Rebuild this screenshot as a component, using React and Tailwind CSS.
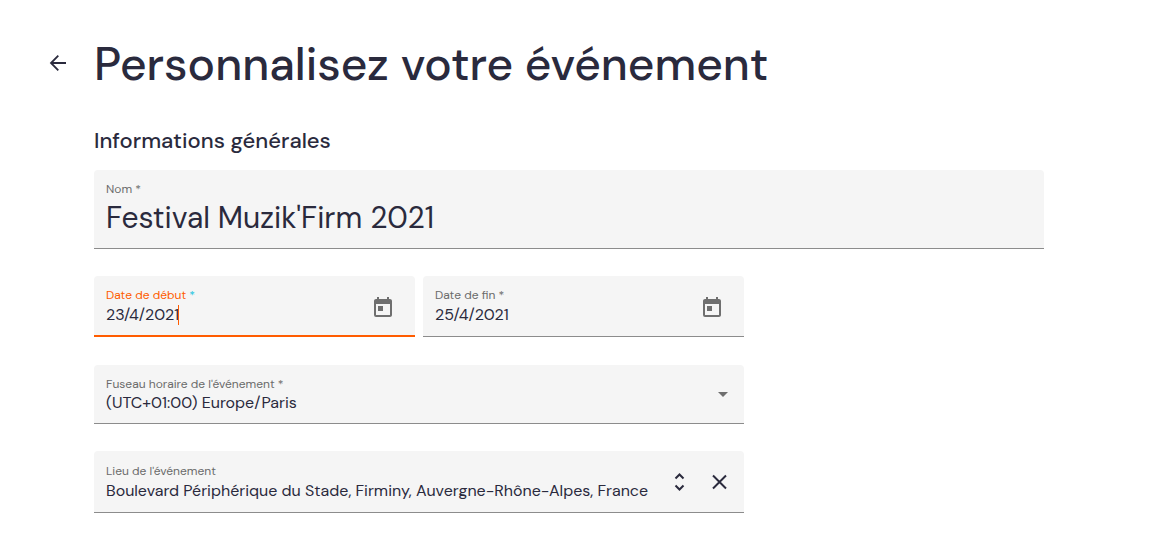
import React from "react";
import { MdToday, MdArrowDropDown } from "react-icons/md";

const valueClass = "block bg-transparent p-0 text-base leading-5 text-[#2a2a3d] outline-none";

function Field({ id, label, required, focused, className, children, actions }) {
  return (
    <div
      className={`flex items-center rounded-t bg-[#f5f5f5] px-3 ${
        focused ? "border-b-2 border-[#ff5c00]" : "border-b border-[#8c8c8c]"
      } ${className}`}
    >
      <div className="min-w-0 flex-1 self-start pt-[11px]">
        <label
          htmlFor={id}
          className={`block text-xs leading-4 ${focused ? "text-[#ff5c00]" : "text-[#6b6b6b]"}`}
        >
          {label}
          {required && <span className={focused ? "text-[#22c3e0]" : ""}> *</span>}
        </label>
        {children}
      </div>
      {actions}
    </div>
  );
}

function CalendarButton({ label }) {
  return (
    <button type="button" aria-label={label} className="mt-1 mr-2 text-[#6f6f6f]">
      <MdToday size={24} />
    </button>
  );
}

export default function App() {
  return (
    <main className="bg-white py-9 pr-[118px] pl-[46px] font-['DM_Sans','Inter',sans-serif] text-[#2a2a3d]">
      <header className="flex items-center gap-6">
        <button type="button" aria-label="Retour" className="shrink-0">
          <svg viewBox="0 0 24 24" className="size-6" fill="none" stroke="currentColor" strokeWidth="1.8">
            <path d="M20 11H5M12.3 3.7 5 11l7.3 7.3" />
          </svg>
        </button>
        <h1 className="text-[46px] leading-[56px] font-medium">Personnalisez votre événement</h1>
      </header>

      <form className="pl-12">
        <h2 className="mt-[33px] text-[22px] leading-8 font-medium">Informations générales</h2>

        <Field id="name" label="Nom" required className="mt-[13px] h-[79px]">
          <input
            id="name"
            defaultValue="Festival Muzik'Firm 2021"
            className="block h-10 w-full bg-transparent p-0 text-3xl outline-none"
          />
        </Field>

        <div className="max-w-[650px]">
          <div className="mt-[27px] grid grid-cols-2 gap-2">
            <Field
              id="start"
              label="Date de début"
              required
              focused
              className="h-[61px]"
              actions={<CalendarButton label="Choisir la date de début" />}
            >
              <div className="flex pt-0.5">
                <input id="start" defaultValue="23/4/2021" className={`field-sizing-content ${valueClass}`} />
                <span aria-hidden="true" className="-ml-px h-5 shrink-0 border-l border-[#ff5c00]" />
              </div>
            </Field>
            <Field
              id="end"
              label="Date de fin"
              required
              className="h-[61px]"
              actions={<CalendarButton label="Choisir la date de fin" />}
            >
              <div className="pt-0.5">
                <input id="end" defaultValue="25/4/2021" className={`w-full ${valueClass}`} />
              </div>
            </Field>
          </div>

          <Field
            id="timezone"
            label="Fuseau horaire de l'événement"
            required
            className="mt-7 h-[59px]"
            actions={<MdArrowDropDown size={24} className="pointer-events-none -mr-[3px] text-[#6f6f6f]" />}
          >
            <div className="pt-px">
              <select id="timezone" className={`w-full appearance-none ${valueClass}`}>
                <option>(UTC+01:00) Europe/Paris</option>
              </select>
            </div>
          </Field>

          <Field
            id="place"
            label="Lieu de l'événement"
            className="mt-[27px] h-[62px] pt-px"
            actions={
              <div className="flex gap-4">
                <button type="button" aria-label="Afficher les lieux">
                  <svg viewBox="0 0 24 24" className="size-6" fill="none" stroke="currentColor" strokeWidth="2">
                    <path d="M7.5 8.5l4-4 4 4M7.5 15.5l4 4 4-4" />
                  </svg>
                </button>
                <button type="button" aria-label="Effacer le lieu">
                  <svg viewBox="0 0 24 24" className="size-6" fill="none" stroke="currentColor" strokeWidth="2">
                    <path d="M5 5.5l13 13M18 5.5l-13 13" />
                  </svg>
                </button>
              </div>
            }
          >
            <div className="pt-0.5">
              <input
                id="place"
                defaultValue="Boulevard Périphérique du Stade, Firminy, Auvergne-Rhône-Alpes, France"
                className={`w-full ${valueClass}`}
              />
            </div>
          </Field>
        </div>
      </form>
    </main>
  );
}
